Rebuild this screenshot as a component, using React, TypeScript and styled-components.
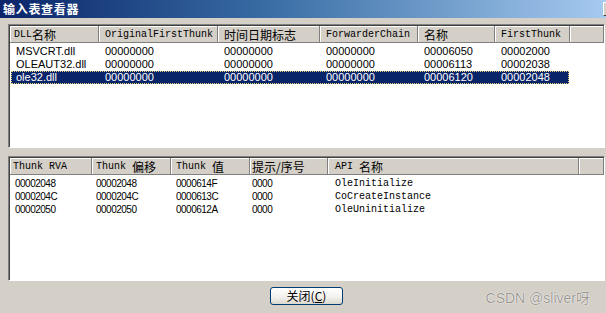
import React from 'react';
import styled, { createGlobalStyle } from 'styled-components';

const GlobalStyle = createGlobalStyle`
  html, body { margin: 0; padding: 0; background: #d4d0c8; }
  body {
    width: 606px;
    height: 313px;
    overflow: hidden;
    font-family: "Liberation Sans", "Noto Sans CJK SC", sans-serif;
  }
`;

type FontKind = 'sans' | 'narrow' | 'mono';

interface Column {
  label: React.ReactNode;
  width: number;
  pad?: number;
  font: FontKind;
}

const Window = styled.div`
  width: 606px;
  height: 313px;
  background: #d4d0c8;
  display: flex;
  flex-direction: column;
  overflow: hidden;
`;

const TitleBar = styled.div`
  height: 18px;
  flex: none;
  display: flex;
  align-items: center;
  justify-content: space-between;
  padding-left: 3px;
  background: linear-gradient(to right, #0a246a 0%, #3a6ea5 45%, #a6caf0 100%);
  overflow: hidden;
`;

const Title = styled.span`
  color: #fff;
  font: bold 12px "Noto Sans CJK SC", sans-serif;
  letter-spacing: 0.7px;
  line-height: 18px;
`;

const CloseBox = styled.div`
  width: 16px;
  height: 14px;
  margin-right: -13px;
  background: #d4d0c8;
  border: 1px solid;
  border-color: #fff #404040 #404040 #fff;
  box-sizing: border-box;
  font: bold 10px "Liberation Sans", sans-serif;
  line-height: 11px;
  padding-left: 2px;
  color: #000;
`;

const Body = styled.div`
  flex: 1;
  display: flex;
  flex-direction: column;
  gap: 8px;
  padding: 6px 1px 0 8px;
`;

const ListBox = styled.div<{ $height: number }>`
  height: ${({ $height }) => $height}px;
  box-sizing: border-box;
  background: #fff;
  border: 1px solid;
  border-color: #808080 #fff #fff #808080;
  overflow: hidden;
`;

const ListInner = styled.div`
  height: 100%;
  box-sizing: border-box;
  border-top: 1px solid #404040;
  border-left: 1px solid #404040;
  display: flex;
  flex-direction: column;
`;

const Header = styled.div`
  display: flex;
  height: 17px;
  flex: none;
`;

const HeaderCell = styled.div<{ $width?: number; $pad: number }>`
  ${({ $width }) => ($width ? `width: ${$width}px; flex: none;` : 'flex: 1;')}
  display: flex;
  align-items: center;
  box-sizing: border-box;
  padding-left: ${({ $pad }) => $pad}px;
  padding-top: 1px;
  background: #d4d0c8;
  border-right: 1px solid #808080;
  border-bottom: 1px solid #808080;
  box-shadow: inset 1px 1px 0 #fff;
  font: 10px "Liberation Mono", "Noto Sans CJK SC", monospace;
  line-height: 12px;
  color: #000;
  white-space: pre;
  overflow: hidden;
`;

const Cjk = styled.span`
  font: 12px "Noto Sans CJK SC", sans-serif;
  line-height: 12px;
`;

const Rows = styled.div`
  padding-top: 2px;
  padding-left: 1px;
`;

const Row = styled.div<{ $selected?: boolean; $width: number }>`
  display: flex;
  width: ${({ $width }) => $width}px;
  height: 13px;
  box-sizing: border-box;
  border: 1px ${({ $selected }) => ($selected ? 'dotted #e8d77a' : 'solid transparent')};
  background: ${({ $selected }) => ($selected ? '#0a246a' : 'transparent')};
  color: ${({ $selected }) => ($selected ? '#fff' : '#000')};
`;

const fonts: Record<FontKind, string> = {
  sans: `font: 11px "Liberation Sans", sans-serif;`,
  narrow: `font: 10px "Liberation Sans", sans-serif; letter-spacing: -0.5px;`,
  mono: `font: 10px "Liberation Mono", monospace;`,
};

const Cell = styled.div<{ $width: number; $pad: number; $font: FontKind }>`
  width: ${({ $width }) => $width}px;
  flex: none;
  box-sizing: border-box;
  padding-left: ${({ $pad }) => $pad}px;
  ${({ $font }) => fonts[$font]}
  line-height: 11px;
  white-space: nowrap;
  overflow: hidden;
`;

const Footer = styled.div`
  position: relative;
  flex: 1;
  display: flex;
  justify-content: center;
  align-items: flex-start;
  padding: 6px 0 0 7px;
`;

const Button = styled.button`
  width: 73px;
  height: 18px;
  padding: 0;
  border: 1px solid #003c74;
  border-radius: 3px;
  background: linear-gradient(#ffffff, #f3f2ee 55%, #dcd8cf);
  font: 12px "Noto Sans CJK SC", sans-serif;
  line-height: 14px;
  color: #000;
  u { text-decoration: underline; }
`;

const Watermark = styled.div`
  position: absolute;
  right: 16px;
  top: 6px;
  font: 14px "Liberation Sans", "Noto Sans CJK SC", sans-serif;
  color: #9d9993;
  text-shadow: 0 0 1px #fff, 0 0 1px #fff;
`;

interface ListProps {
  height: number;
  columns: Column[];
  rows: string[][];
  selected?: number;
}

const ListView = ({ height, columns, rows, selected }: ListProps) => {
  const rowWidth = columns.reduce((s, c) => s + c.width, 0) - 2;
  return (
    <ListBox $height={height}>
      <ListInner>
        <Header>
          {columns.map((c, i) => (
            <HeaderCell key={i} $width={c.width} $pad={c.pad ?? 5}>
              {c.label}
            </HeaderCell>
          ))}
          <HeaderCell $pad={0} />
        </Header>
        <Rows>
          {rows.map((r, ri) => (
            <Row key={ri} $selected={ri === selected} $width={rowWidth}>
              {r.map((v, ci) => (
                <Cell
                  key={ci}
                  $width={columns[ci].width - (ci === 0 ? 2 : 0)}
                  $pad={columns[ci].pad ?? 5}
                  $font={columns[ci].font}
                >
                  {v}
                </Cell>
              ))}
            </Row>
          ))}
        </Rows>
      </ListInner>
    </ListBox>
  );
};

const dllColumns: Column[] = [
  { label: <>DLL<Cjk>名称</Cjk></>, width: 89, pad: 4, font: 'sans' },
  { label: 'OriginalFirstThunk', width: 119, pad: 6, font: 'sans' },
  { label: <Cjk>时间日期标志</Cjk>, width: 102, pad: 6, font: 'sans' },
  { label: 'ForwarderChain', width: 98, pad: 6, font: 'sans' },
  { label: <Cjk>名称</Cjk>, width: 77, pad: 6, font: 'sans' },
  { label: 'FirstThunk', width: 75, pad: 6, font: 'sans' },
];

const dllRows = [
  ['MSVCRT.dll', '00000000', '00000000', '00000000', '00006050', '00002000'],
  ['OLEAUT32.dll', '00000000', '00000000', '00000000', '00006113', '00002038'],
  ['ole32.dll', '00000000', '00000000', '00000000', '00006120', '00002048'],
];

const thunkColumns: Column[] = [
  { label: 'Thunk RVA', width: 82, pad: 3, font: 'narrow' },
  { label: <>{'Thunk '}<Cjk>偏移</Cjk></>, width: 79, pad: 4, font: 'narrow' },
  { label: <>{'Thunk '}<Cjk>值</Cjk></>, width: 79, pad: 5, font: 'narrow' },
  { label: <Cjk>提示/序号</Cjk>, width: 78, pad: 2, font: 'narrow' },
  { label: <>{'API '}<Cjk>名称</Cjk></>, width: 251, pad: 7, font: 'mono' },
];

const thunkRows = [
  ['00002048', '00002048', '0000614F', '0000', 'OleInitialize'],
  ['0000204C', '0000204C', '0000613C', '0000', 'CoCreateInstance'],
  ['00002050', '00002050', '0000612A', '0000', 'OleUninitialize'],
];

export default function App() {
  return (
    <>
      <GlobalStyle />
      <Window>
        <TitleBar>
          <Title>输入表查看器</Title>
          <CloseBox>×</CloseBox>
        </TitleBar>
        <Body>
          <ListView height={124} columns={dllColumns} rows={dllRows} selected={2} />
          <ListView height={125} columns={thunkColumns} rows={thunkRows} />
        </Body>
        <Footer>
          <Button>
            关闭(<u>C</u>)
          </Button>
          <Watermark>CSDN @sliver呀</Watermark>
        </Footer>
      </Window>
    </>
  );
}
